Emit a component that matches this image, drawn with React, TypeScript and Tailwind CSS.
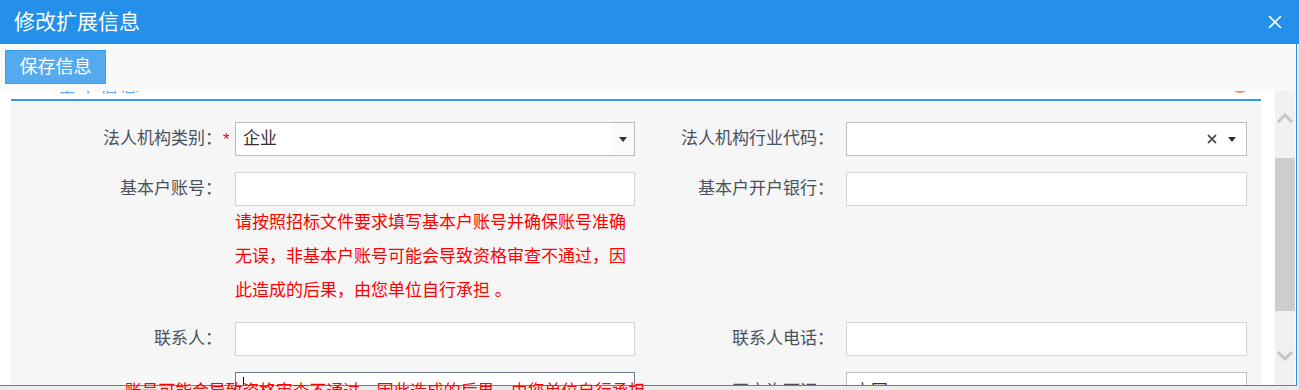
import React from 'react';

function Chevron({ down }: { down?: boolean }) {
  return (
    <svg width="16" height="10" viewBox="0 0 16 10" fill="none">
      <polyline
        points={down ? '1,1 8,8 15,1' : '1,9 8,2 15,9'}
        stroke="#c6c6c6"
        strokeWidth="3"
      />
    </svg>
  );
}

function Caret() {
  return (
    <svg width="8" height="5" viewBox="0 0 8 5">
      <polygon points="0,0 8,0 4,5" fill="#333" />
    </svg>
  );
}

function Label({ text, star, right }: { text: string; star?: boolean; right?: boolean }) {
  return (
    <div
      className={
        right
          ? 'flex h-[34px] items-center justify-end pr-[12px] text-[17px] text-[#4a505c]'
          : 'flex h-[34px] items-center justify-end text-[17px] text-[#4a505c]'
      }
    >
      <span>{text}</span>
      {!right && (
        <span className="w-[13px] pl-[1px] text-[17px] leading-none text-[#ff0000]">
          {star ? '*' : ''}
        </span>
      )}
    </div>
  );
}

function Input({ children, className }: { children?: React.ReactNode; className?: string }) {
  return (
    <div className={'flex h-[34px] items-center bg-white ' + (className ?? 'border border-[#d4d4d4]')}>
      {children}
    </div>
  );
}

export default function App() {
  return (
    <div className="relative h-[390px] w-full overflow-hidden bg-[#ececec] font-['Liberation_Sans','Noto_Sans_CJK_SC',sans-serif]">
      {/* title bar */}
      <div className="flex h-[44px] items-center justify-between bg-[#2490ea] pl-[14px] pr-[17px]">
        <span className="text-[21px] text-white">修改扩展信息</span>
        <svg width="14" height="14" viewBox="0 0 14 14">
          <path d="M1 1L13 13M13 1L1 13" stroke="#fff" strokeWidth="1.6" />
        </svg>
      </div>

      <div className="flex h-[342px] w-[1297px] flex-col border-r border-b border-[#2b8de4] bg-white">
        {/* toolbar */}
        <div className="h-[47px] shrink-0 bg-[#f9f9f9] pl-[5px] pt-[6px]">
          <button className="flex h-[34px] w-[101px] items-center justify-center border border-[#3d9ce2] bg-[#55a9ef] text-[18px] text-white">
            保存信息
          </button>
        </div>

        <div className="flex min-h-0 flex-1">
          <div className="flex min-w-0 flex-1 flex-col overflow-hidden">
            {/* legend strip (mostly scrolled away) */}
            <div className="flex h-[8px] shrink-0 justify-between overflow-hidden pl-[58px] pr-[25px]">
              <span className="-mt-[13px] text-[18px] leading-[17px] tracking-[3px] text-[#5ea9ef]">基本信息</span>
              <span className="-mt-[18px] h-[20px] w-[20px] rounded-full border-2 border-[#f0865a] bg-white" />
            </div>

            {/* fieldset panel */}
            <div className="ml-[11px] w-[1250px] flex-1 border-t-2 border-[#3399f0] bg-[#f6f6f6] pt-[21px]">
              <div className="grid grid-cols-[224px_400px_211px_401px] items-start">
                <Label text="法人机构类别：" star />
                <Input className="border border-[#bdbdbd]">
                  <span className="flex-1 pl-[7px] text-[17px] text-[#333]">企业</span>
                  <span className="flex h-full w-[22px] items-center justify-center bg-[#fafafa]">
                    <Caret />
                  </span>
                </Input>
                <Label text="法人机构行业代码：" right />
                <Input className="border border-[#bdbdbd]">
                  <span className="flex-1" />
                  <svg width="10" height="10" viewBox="0 0 10 10" className="mr-[11px]">
                    <path d="M1 1L9 9M9 1L1 9" stroke="#555" strokeWidth="1.8" />
                  </svg>
                  <span className="mr-[10px]">
                    <Caret />
                  </span>
                </Input>
              </div>

              <div className="mt-[16px] grid grid-cols-[224px_400px_211px_401px] items-start">
                <Label text="基本户账号：" />
                <div>
                  <Input />
                  <p className="text-[17px] leading-[34px] text-[#ff0000]">
                    请按照招标文件要求填写基本户账号并确保账号准确无误，非基本户账号可能会导致资格审查不通过，因此造成的后果，由您单位自行承担 。
                  </p>
                </div>
                <Label text="基本户开户银行：" right />
                <Input />
              </div>

              <div className="mt-[14px] grid grid-cols-[224px_400px_211px_401px] items-start">
                <Label text="联系人：" />
                <Input />
                <Label text="联系人电话：" right />
                <Input />
              </div>

              <div className="mt-[16px] grid grid-cols-[224px_400px_211px_401px] items-start">
                <Label text="" />
                <div className="flex h-[34px] items-start border border-[#6f7a8c] bg-white pl-[7px] pt-[4px]">
                  <span className="h-[18px] w-[1px] bg-black" />
                </div>
                <div className="pt-[3px]">
                  <Label text="开户许可证：" right />
                </div>
                <Input className="border border-[#bdbdbd] pt-[6px]">
                  <span className="pl-[7px] text-[17px] text-[#333]">中国</span>
                </Input>
              </div>
            </div>
          </div>

          {/* scrollbar */}
          <div className="mr-[1px] flex w-[20px] shrink-0 flex-col bg-[#f1f1f1]">
            <div className="flex h-[67px] shrink-0 justify-center pt-[22px]">
              <Chevron />
            </div>
            <div className="h-[153px] shrink-0 bg-[#cdcdcd]" />
            <div className="flex flex-1 items-end justify-center pb-[24px]">
              <Chevron down />
            </div>
          </div>
        </div>
      </div>

      {/* overflowing validation message */}
      <span className="absolute left-[125px] top-[383px] z-10 whitespace-nowrap text-[16.8px] leading-[17px] text-[#ff0000]">
        账号可能会导致资格审查不通过，因此造成的后果，由您单位自行承担
      </span>
    </div>
  );
}
